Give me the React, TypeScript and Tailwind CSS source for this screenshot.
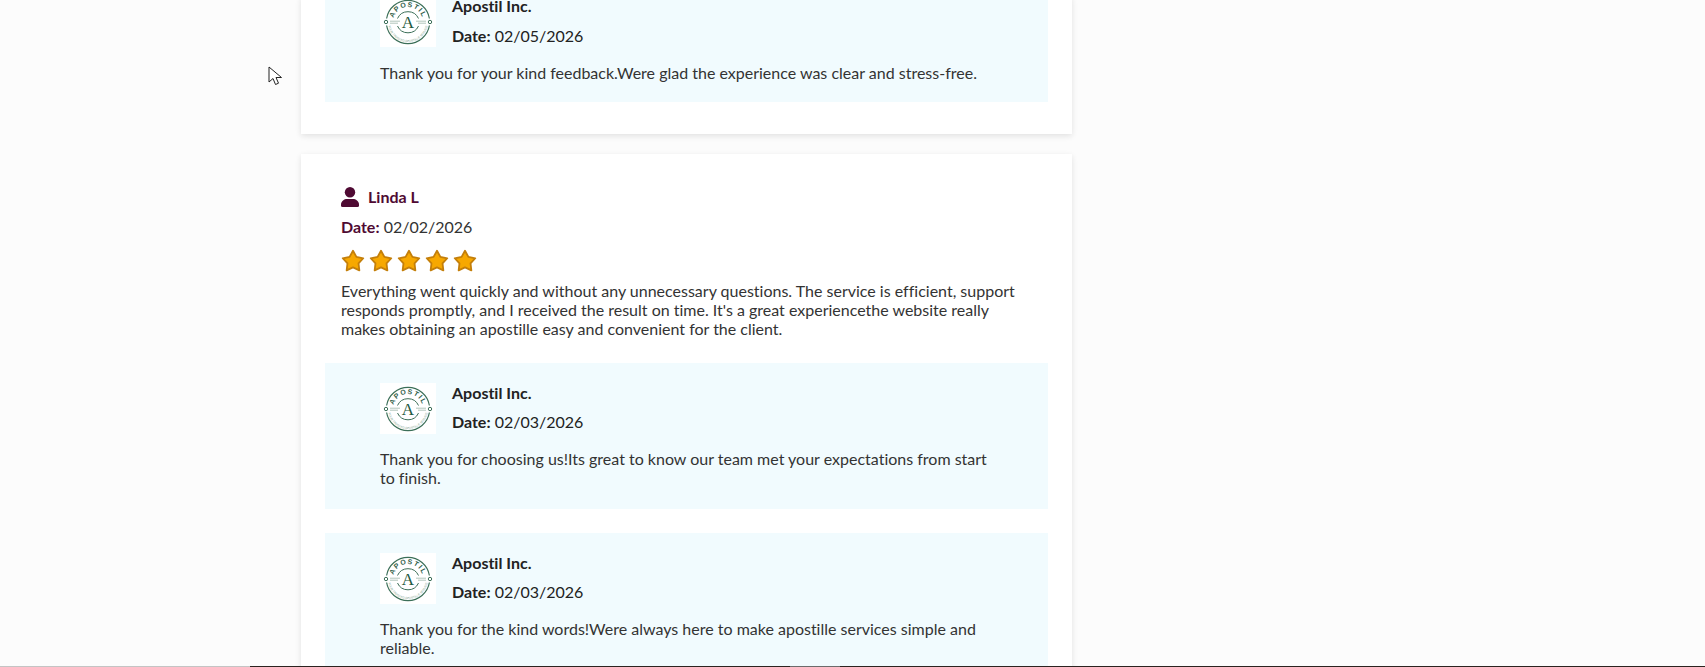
const fontStack = "font-['Lato','Open_Sans',sans-serif] [font-variant-ligatures:none]"

const Logo = () => (
  <div className="w-[56px] h-[51px] bg-white shrink-0 flex items-center justify-center">
    <svg width="50" height="50" viewBox="0 0 50 50" fill="none">
      <defs>
        <path id="apostil-arc" d="M10 25a15 15 0 0 1 30 0" />
        <path id="apostil-arc-low" d="M5 25a20 20 0 0 0 40 0" />
      </defs>
      <path d="M3.600 21.500a21.700 21.700 0 0 1 42.800 0M46.400 28.500a21.700 21.700 0 0 1-42.800 0" stroke="#3c6f58" strokeWidth="1.200" />
      <path d="M14.500 21.500a11.500 11.500 0 0 1 21 0M35.500 29a11.500 11.500 0 0 1-21 0" stroke="#3c6f58" strokeWidth="1" />
      <path d="M7 24.200h10M7 26.200h8M33 24.200h10M35 26.200h8" stroke="#8fae9f" strokeWidth="0.700" />
      <circle cx="3" cy="25" r="1.700" stroke="#3c6f58" strokeWidth="1" />
      <circle cx="47" cy="25" r="1.700" stroke="#3c6f58" strokeWidth="1" />
      <text fontSize="7" fontWeight="700" fill="#2f6049" letterSpacing="1.200" fontFamily="'Liberation Sans',sans-serif">
        <textPath href="#apostil-arc" startOffset="50%" textAnchor="middle">APOSTIL</textPath>
      </text>
      <text fontSize="3" fill="#7f9f90" fontFamily="'Liberation Sans',sans-serif">
        <textPath href="#apostil-arc-low" startOffset="50%" textAnchor="middle">YOUR TRUSTED APOSTILLE SERVICE</textPath>
      </text>
      <text x="25" y="31" textAnchor="middle" fontSize="17" fill="#1f5a40" fontFamily="'Liberation Serif',serif">A</text>
    </svg>
  </div>
)

const Star = () => (
  <svg width="24" height="24" viewBox="0 0 24 24">
    <path
      d="M12 1.800L15.410 7.910 22.270 9.260 17.520 14.390 18.350 21.340 12 18.400 5.650 21.340 6.480 14.390 1.730 9.260 8.590 7.910z"
      fill="#f7a800"
      stroke="#c47f0a"
      strokeWidth="1.800"
      strokeLinejoin="round"
    />
  </svg>
)

const PersonIcon = () => (
  <svg width="18" height="20" viewBox="0 0 18 20" fill="#4f0a33">
    <circle cx="9" cy="5.200" r="5.200" />
    <path d="M0 18.500v-1C0 14 3.500 12 6 12h6c2.500 0 6 2 6 5.500v1a1.500 1.500 0 0 1-1.500 1.500h-15A1.500 1.500 0 0 1 0 18.500z" />
  </svg>
)

const ReplyHead = ({ date, dateGap = "mt-[9px]" }: { date: string; dateGap?: string }) => (
  <div className="flex gap-4">
    <Logo />
    <div className="text-[#222]">
      <p className="font-bold text-[16px] leading-[20px]">Apostil Inc.</p>
      <p className={`text-[16px] leading-[20px] ${dateGap}`}>
        <span className="font-bold">Date:</span> {date}
      </p>
    </div>
  </div>
)

const Reply = ({ date, text }: { date: string; text: string }) => (
  <div className="bg-[#f1fbfe] pt-5 pb-[22px] px-[55px]">
    <ReplyHead date={date} />
    <p className="mt-[15px] text-[16px] leading-[19px] text-[#333]">{text}</p>
  </div>
)

export default function App() {
  return (
    <div className={`${fontStack} relative h-[667px] w-full overflow-hidden bg-[#fcfcfc]`}>
      {/* page is scrolled, first card starts above the fold */}
      <div className="ml-[301px] w-[771px] -mt-[4px] flex flex-col gap-5">
        <div className="bg-white shadow-[0_2px_6px_rgba(0,0,0,0.11)] px-6 pb-8">
          <div className="bg-[#f1fbfe] pb-[20px] px-[55px]">
            <ReplyHead date="02/05/2026" dateGap="mt-[10px]" />
            <p className="mt-4 text-[16px] leading-[19px] text-[#333]">
              Thank you for your kind feedback.Were glad the experience was clear and stress-free.
            </p>
          </div>
        </div>

        <div className="bg-white shadow-[0_2px_6px_rgba(0,0,0,0.11)] px-6 pt-[31px] pb-8">
          <div className="pl-4 pr-4">
            <div className="flex items-center gap-[9px]">
              <PersonIcon />
              <span className="font-bold text-[16px] text-[#4f0a33]">Linda L</span>
            </div>
            <p className="mt-2 text-[16px] leading-[20px] text-[#333]">
              <span className="font-bold text-[#4f0a33]">Date:</span> 02/02/2026
            </p>
            <div className="mt-3 flex gap-[4px]">
              {[0, 1, 2, 3, 4].map((i) => (
                <Star key={i} />
              ))}
            </div>
            <p className="mt-2 text-[16px] leading-[19px] text-[#333]">
              Everything went quickly and without any unnecessary questions. The service is efficient, support
              responds promptly, and I received the result on time. It's a great experiencethe website really
              makes obtaining an apostille easy and convenient for the client.
            </p>
          </div>
          <div className="mt-[25px] flex flex-col gap-6">
            <Reply
              date="02/03/2026"
              text="Thank you for choosing us!Its great to know our team met your expectations from start to finish."
            />
            <Reply
              date="02/03/2026"
              text="Thank you for the kind words!Were always here to make apostille services simple and reliable."
            />
          </div>
        </div>
      </div>

      {/* mouse pointer caught in the capture */}
      <svg className="absolute left-[268px] top-[66px]" width="16" height="22" viewBox="0 0 16 22">
        <path d="M1 1v15l4-3.500 2.500 6 3-1.300-2.500-5.700h5.500z" fill="#fff" stroke="#222" strokeWidth="1" />
      </svg>

      {/* bottom edge line */}
      <div className="absolute inset-x-0 bottom-0 h-px flex">
        <div className="w-[250px] bg-[#c4c4c4]" />
        <div className="w-[540px] bg-[#2b2320]" />
        <div className="w-[50px] bg-[#6b6b6b]" />
        <div className="flex-1 bg-[#2b2320]" />
      </div>
    </div>
  )
}
